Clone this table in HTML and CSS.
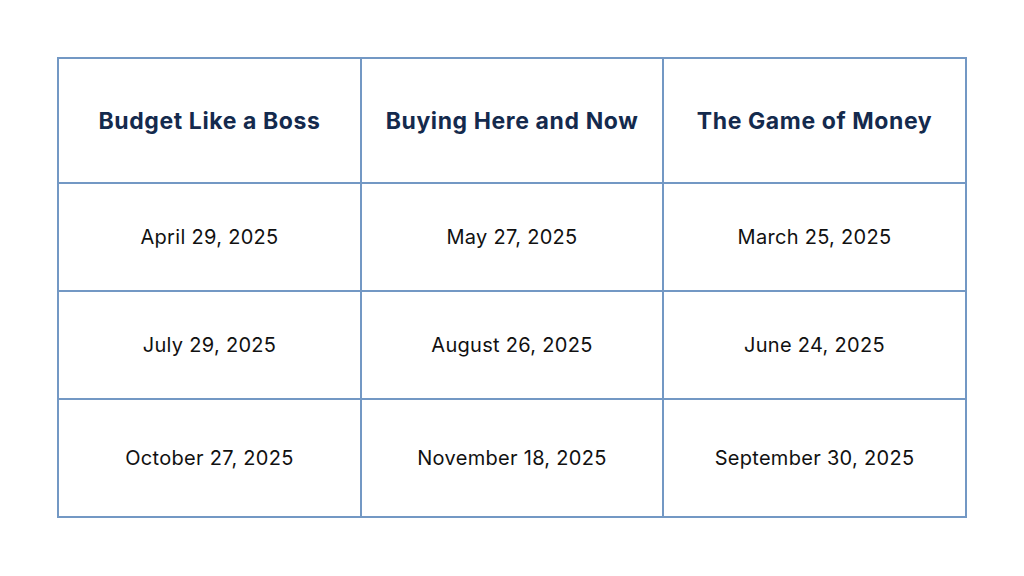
FILE: index.html
```html
<!DOCTYPE html>
<html>
<head>
<meta charset="utf-8">
<link rel="stylesheet" href="styles.css">
</head>
<body>
<div class="page">
  <table class="schedule">
    <colgroup><col class="c1"><col class="c2"><col class="c3"></colgroup>
    <thead>
      <tr class="head-row">
        <th>Budget Like a Boss</th>
        <th>Buying Here and Now</th>
        <th>The Game of Money</th>
      </tr>
    </thead>
    <tbody>
      <tr class="row">
        <td>April 29, 2025</td>
        <td>May 27, 2025</td>
        <td>March 25, 2025</td>
      </tr>
      <tr class="row">
        <td>July 29, 2025</td>
        <td>August 26, 2025</td>
        <td>June 24, 2025</td>
      </tr>
      <tr class="row last">
        <td>October 27, 2025</td>
        <td>November 18, 2025</td>
        <td>September 30, 2025</td>
      </tr>
    </tbody>
  </table>
</div>
</body>
</html>
```
FILE: styles.css
```css
html, body {
  margin: 0;
  padding: 0;
  background: #ffffff;
}
.page {
  width: 1024px;
  height: 576px;
  box-sizing: border-box;
  padding: 57px 0 0 57px;
}
.schedule {
  border-collapse: collapse;
  table-layout: fixed;
  width: 910px;
  font-family: Inter, "Noto Sans", sans-serif;
}
.c1 { width: 303px; }
.c2 { width: 302px; }
.c3 { width: 303px; }
.schedule th, .schedule td {
  border: 2px solid #7398c4;
  text-align: center;
  vertical-align: middle;
  padding: 0;
}
.schedule th {
  font-weight: 700;
  font-size: 23px;
  color: #142a4d;
  letter-spacing: 0.6px;
}
.schedule td {
  font-weight: 400;
  font-size: 20px;
  color: #111111;
  letter-spacing: 0.3px;
}
.head-row { height: 125px; }
.row { height: 108px; }
.row.last { height: 118px; }
```
